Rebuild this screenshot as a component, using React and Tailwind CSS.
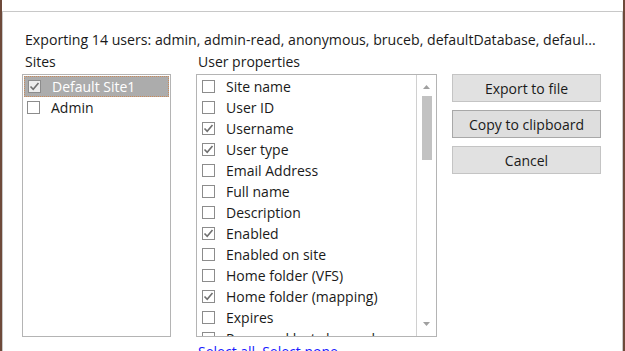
import React from "react";

const sites = [
  { name: "Default Site1", checked: true, selected: true },
  { name: "Admin", checked: false },
];

const props = [
  { name: "Site name", checked: false },
  { name: "User ID", checked: false },
  { name: "Username", checked: true },
  { name: "User type", checked: true },
  { name: "Email Address", checked: false },
  { name: "Full name", checked: false },
  { name: "Description", checked: false },
  { name: "Enabled", checked: true },
  { name: "Enabled on site", checked: false },
  { name: "Home folder (VFS)", checked: false },
  { name: "Home folder (mapping)", checked: true },
  { name: "Expires", checked: false },
  { name: "Password last changed", checked: false },
];

const Check = ({ checked, light }) => (
  <div
    className={`w-[13px] h-[13px] shrink-0 border border-[#8c8c8c] flex items-center justify-center ${
      light ? "bg-[#ececec]" : "bg-white"
    }`}
  >
    {checked && (
      <svg width="11" height="11" viewBox="0 0 11 11">
        <path d="M1.5 5.5 L4.2 8.3 L9.5 2" fill="none" stroke="#707070" strokeWidth="1.6" />
      </svg>
    )}
  </div>
);

const Button = ({ children, focus }) => (
  <button
    className={`h-[28px] w-full border text-[14px] leading-[19px] text-[#1a1a1a] ${
      focus ? "bg-[#dedede] border-[#a8a8a8]" : "bg-[#e1e1e1] border-[#c4c4c4]"
    }`}
  >
    {children}
  </button>
);

export default function App() {
  return (
    <div
      className="w-[625px] h-[351px] overflow-hidden bg-white border-l-2 border-r-2 border-[#6e4a3a] text-[#1a1a1a] text-[14px]"
      style={{ fontFamily: '"Open Sans", "Noto Sans", sans-serif' }}
    >
      <div className="h-[11px]"></div>
      <div className="h-[340px] border-t border-l border-r border-[#c8c8c8] pl-[19px] pt-[18px]">
        <div className="leading-[19px] pl-[3px] whitespace-nowrap text-[14.15px]">
          Exporting 14 users: admin, admin-read, anonymous, bruceb, defaultDatabase, defaul...
        </div>

        <div className="flex mt-[3px]">
          {/* Sites */}
          <div className="w-[149px] flex flex-col">
            <div className="leading-[19px] pl-[3px] mb-[3px]">Sites</div>
            <div className="h-[263px] border border-[#b4b4b4] p-px">
              {sites.map((s) => (
                <div
                  key={s.name}
                  className={`h-[21px] flex items-center gap-[11px] pl-[3px] ${
                    s.selected ? "bg-[#acacac] text-white border border-dotted border-[#c98a5a]" : ""
                  }`}
                >
                  <Check checked={s.checked} light={s.selected} />
                  <span className="leading-[19px]">{s.name}</span>
                </div>
              ))}
            </div>
          </div>

          {/* User properties */}
          <div className="w-[241px] ml-[25px] flex flex-col">
            <div className="leading-[19px] pl-[2px] mb-[3px]">User properties</div>
            <div className="h-[263px] border border-[#b4b4b4] flex overflow-hidden">
              <div className="flex-1 pt-px pl-[5px] overflow-hidden">
                {props.map((p) => (
                  <div key={p.name} className="h-[21px] flex items-center gap-[11px] shrink-0">
                    <Check checked={p.checked} />
                    <span className="leading-[19px] whitespace-nowrap">{p.name}</span>
                  </div>
                ))}
              </div>
              <div className="w-[20px] border-l border-[#d0d0d0] flex flex-col items-center">
                <svg width="7" height="4" viewBox="0 0 7 4" className="mt-[10px]">
                  <path d="M0 4 L3.5 0 L7 4 Z" fill="#a0a0a0" />
                </svg>
                <div className="w-[10px] h-[64px] bg-[#c2c2c2] mt-[7px]"></div>
                <div className="flex-1"></div>
                <svg width="7" height="4" viewBox="0 0 7 4" className="mb-[10px]">
                  <path d="M0 0 L3.5 4 L7 0 Z" fill="#a0a0a0" />
                </svg>
              </div>
            </div>
            <div className="pl-[2px] mt-[5px] leading-[19px] text-[#1a1aff] flex gap-[7px] whitespace-nowrap">
              <span>Select all</span>
              <span>Select none</span>
            </div>
          </div>

          {/* Buttons */}
          <div className="w-[149px] ml-[15px] pt-[22px] flex flex-col gap-[8px]">
            <Button>Export to file</Button>
            <Button focus>Copy to clipboard</Button>
            <Button>Cancel</Button>
          </div>
        </div>
      </div>
    </div>
  );
}
